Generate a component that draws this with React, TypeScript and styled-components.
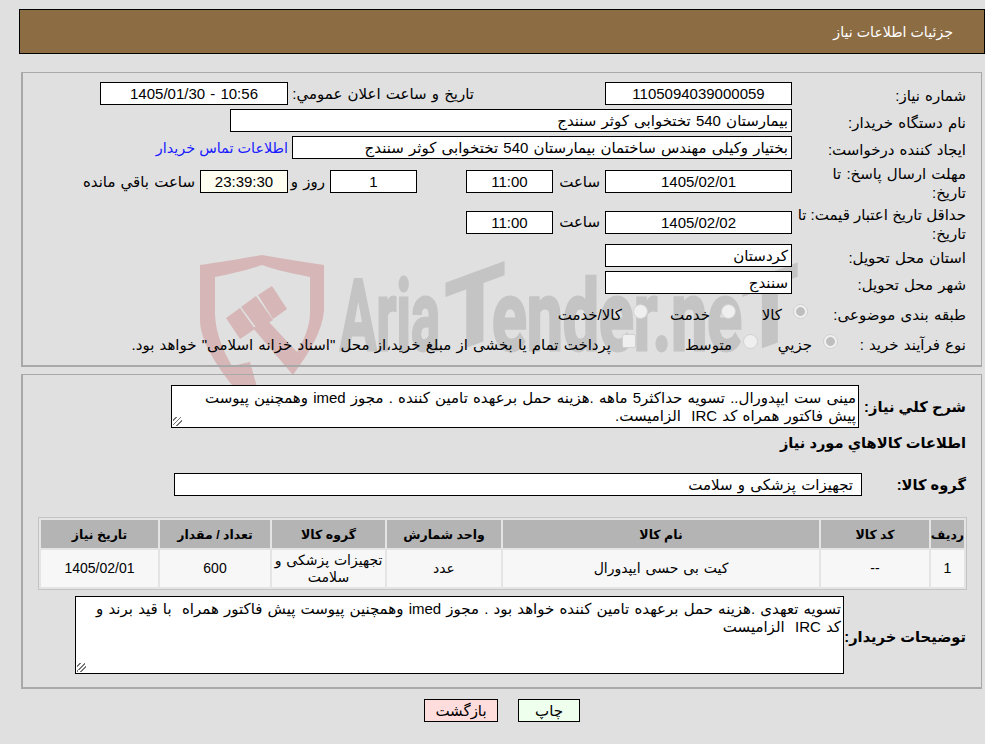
import React from "react";
import styled, { createGlobalStyle } from "styled-components";

const Global = createGlobalStyle`
  html, body { margin: 0; padding: 0; background: #e0e0e0; }
  body { font-family: "Liberation Sans", "DejaVu Sans", sans-serif; font-size: 15px; word-spacing: 1px; color: #000; }
  * { box-sizing: border-box; }
`;
const Page = styled.div`
  position: relative; width: 985px; height: 744px; padding: 9px 0 0 19px; overflow: hidden; direction: rtl;
`;
const Header = styled.div`
  position: relative; z-index: 1;
  height: 45px; background: #8c6c43; border: 1px solid #000; color: #fff; font-size: 14.2px; word-spacing: 0;
  display: flex; align-items: center; padding: 0 31px 0 0; margin-bottom: 18px;
`;
const Panel = styled.section`
  position: relative; z-index: 1;
  width: 961px; margin-right: 3px; border: 1px solid #a8a8a8; border-bottom-width: 2px; border-left-width: 2px;
`;
const FormPanel = styled(Panel)`height: 295px; padding-top: 9px; margin-bottom: 7px;`;
const DetailPanel = styled(Panel)`height: 315px; padding-top: 10px; margin-bottom: 10px;`;
const Row = styled.div<{ $h: number }>`
  display: flex; align-items: center; height: ${p => p.$h}px; margin-bottom: 4px; padding-right: 15px;
`;
const Label = styled.div<{ $w?: number; $tight?: boolean }>`
  width: ${p => p.$w ?? 174}px; flex: none; line-height: 19px; padding-top: 3px; white-space: nowrap;
  word-spacing: ${p => (p.$tight ? "0" : "1px")};
`;
const Field = styled.div<{ $w: number; $bg?: string; $align?: string; $mr?: number }>`
  width: ${p => p.$w}px; height: 23px; flex: none; background: ${p => p.$bg ?? "#fff"}; border: 1px solid #000;
  text-align: ${p => p.$align ?? "center"}; padding: 0 3px; line-height: 21px; white-space: nowrap; overflow: hidden;
  margin-right: ${p => p.$mr ?? 0}px;
`;
const Text = styled.span<{ $mr?: number; $w?: number }>`
  margin-right: ${p => p.$mr ?? 0}px; white-space: nowrap; flex: none;
  ${p => (p.$w ? `width:${p.$w}px;` : "")}
`;
const BlueLink = styled.a`color: #1a1aff; margin-right: 4px; white-space: nowrap; font-size: 14.4px; word-spacing: 0;`;
const Radio = styled.span<{ $w: number }>`
  width: ${p => p.$w}px; flex: none; align-self: stretch; padding-top: 4px; display: flex; align-items: center; gap: 11px; white-space: nowrap;
`;
const RadioMark = styled.i<{ $on?: boolean }>`
  width: 15px; height: 15px; margin-bottom: 8px; border-radius: 50%; border: 1px solid #d0d0d0; flex: none;
  background: ${p => (p.$on ? "radial-gradient(circle, #bebebe 0 4px, #f0f0f0 4.8px)" : "#efefef")};
`;
const CheckMark = styled.i`
  width: 14px; height: 14px; margin-bottom: 8px; border-radius: 2px; border: 1px solid #d0d0d0; background: #efefef; flex: none;
`;
const BoldRow = styled.div<{ $h: number }>`
  display: flex; align-items: flex-start; height: ${p => p.$h}px; padding-right: 15px; font-weight: bold; font-size: 14.67px; word-spacing: 0;
`;
const BoldLabel = styled.div<{ $w: number; $top?: number }>`
  width: ${p => p.$w}px; flex: none; padding-top: ${p => p.$top ?? 0}px; white-space: nowrap;
`;
const Area = styled.div<{ $w: number; $h: number }>`
  position: relative; width: ${p => p.$w}px; height: ${p => p.$h}px; background: #fff; border: 1px solid #000; font-weight: normal;
  padding: 3px 2px 0 0; line-height: 18px; font-size: 15px; word-spacing: 1px; flex: none; white-space: nowrap; overflow: hidden;
  &::after {
    content: ""; position: absolute; left: 1px; bottom: 1px; width: 9px; height: 9px;
    background: linear-gradient(45deg, transparent 25%, #777 25% 35%, transparent 35% 50%, #777 50% 60%, transparent 60% 75%, #777 75% 85%, transparent 85%);
    transform: scaleX(-1);
  }
`;
const GroupField = styled.div`
  width: 688px; height: 23px; background: #fff; border: 1px solid #000; font-weight: normal; font-size: 15px; word-spacing: 1px; line-height: 21px; padding-right: 8px; flex: none;
`;
const Table = styled.table`
  width: 929px; margin: 0 14px 6px 0; border-collapse: separate; border-spacing: 2px; border: 1px solid #c4c4c4; background: #e4e4e4; table-layout: fixed;
`;
const Th = styled.th<{ $w: number }>`
  width: ${p => p.$w}px; background: #b4b4b4; height: 28px; font-size: 12.5px; padding: 0; word-spacing: 0;
`;
const Td = styled.td`
  background: #f7f7f7; text-align: center; padding: 0; font-size: 14px; line-height: 17px; height: 37px; white-space: nowrap;
`;
const Buttons = styled.div`
  position: relative; z-index: 1; display: flex; justify-content: center; gap: 20px;
`;
const Btn = styled.button<{ $bg: string; $w: number }>`
  width: ${p => p.$w}px; height: 23px; background: ${p => p.$bg}; border: 1px solid #000; font: inherit; padding: 0; color: #000;
`;
const Watermark = styled.svg`
  position: absolute; left: 195px; top: 245px; pointer-events: none; direction: ltr;
`;
const MarkText = styled.text`
  font-family: Roboto, sans-serif; font-weight: 700; font-size: 98px; fill: #c4c4c4; stroke: #c4c4c4; stroke-width: 3px; word-spacing: 0;
`;

const Logo = () => (
  <Watermark width="620" height="150" viewBox="195 245 620 150">
    <g fill="#d6b6b6">
      <path d="M200 265 C222 262 245 258 262 255 C280 258 302 262 324 265 L324 310 C322 335 305 358 293 375 L253 328 L267 320 L297 352 C305 338 310 325 310 313 L310 277 C295 274 275 270 262 265 C248 270 230 274 215 277 L215 315 C216 335 224 352 232 366 L250 362 L257 387 L232 385 C216 365 200 340 200 320 Z" />
      <polygon points="226,318 240,308 255,329 240,339" />
      <polygon points="241,307 256,296 273,320 258,330" />
      <polygon points="258,295 272,286 287,309 273,319" />
    </g>
    <MarkText x="340" y="350" textLength="100" lengthAdjust="spacingAndGlyphs">Aria</MarkText>
    <MarkText x="445" y="350" transform="translate(0 166) skewY(-20)" textLength="60" lengthAdjust="spacingAndGlyphs">T</MarkText>
    <MarkText x="492" y="350" textLength="250" lengthAdjust="spacingAndGlyphs">ender.ne</MarkText>
    <MarkText x="742" y="350" transform="translate(0 274) skewY(-20)" textLength="56" lengthAdjust="spacingAndGlyphs">T</MarkText>
  </Watermark>
);

export default function App() {
  return (
    <Page>
      <Global />
      <Logo />
      <Header>جزئیات اطلاعات نیاز</Header>
      <FormPanel>
        <Row $h={23}>
          <Label>شماره نیاز:</Label>
          <Field $w={187}>1105094039000059</Field>
          <Text $mr={131} $w={186}>تاریخ و ساعت اعلان عمومي:</Text>
          <Field $w={188}>10:56 - 1405/01/30</Field>
        </Row>
        <Row $h={23}>
          <Label>نام دستگاه خریدار:</Label>
          <Field $w={562} $align="right">بیمارستان 540 تختخوابی کوثر سنندج</Field>
        </Row>
        <Row $h={23}>
          <Label>ایجاد کننده درخواست:</Label>
          <Field $w={500} $align="right">بختیار وکیلی مهندس ساختمان بیمارستان 540 تختخوابی کوثر سنندج</Field>
          <BlueLink>اطلاعات تماس خریدار</BlueLink>
        </Row>
        <Row $h={37}>
          <Label>مهلت ارسال پاسخ: تا<br />تاریخ:</Label>
          <Field $w={187}>1405/02/01</Field>
          <Text $mr={5} $w={47}>ساعت</Text>
          <Field $w={87}>11:00</Field>
          <Field $w={87} $mr={49}>1</Field>
          <Text $mr={5} $w={37}>روز و</Text>
          <Field $w={88} $bg="#fdfdf0">23:39:30</Field>
          <Text $mr={5}>ساعت باقي مانده</Text>
        </Row>
        <Row $h={36}>
          <Label $tight>حداقل تاریخ اعتبار قیمت: تا<br />تاریخ:</Label>
          <Field $w={187}>1405/02/02</Field>
          <Text $mr={5} $w={47}>ساعت</Text>
          <Field $w={87}>11:00</Field>
        </Row>
        <Row $h={23}>
          <Label>استان محل تحویل:</Label>
          <Field $w={187} $align="right">کردستان</Field>
        </Row>
        <Row $h={23}>
          <Label>شهر محل تحویل:</Label>
          <Field $w={187} $align="right">سنندج</Field>
        </Row>
        <Row $h={30}>
          <Label $w={158}>طبقه بندی موضوعی:</Label>
          <Radio $w={72}><RadioMark $on />کالا</Radio>
          <Radio $w={88}><RadioMark />خدمت</Radio>
          <Radio $w={100}><RadioMark />کالا/خدمت</Radio>
        </Row>
        <Row $h={22}>
          <Label $w={128}>نوع فرآیند خرید :</Label>
          <Radio $w={80}><RadioMark $on />جزیي</Radio>
          <Radio $w={122}><RadioMark />متوسط</Radio>
          <Radio $w={520}><CheckMark />پرداخت تمام یا بخشی از مبلغ خرید،از محل "اسناد خزانه اسلامی" خواهد بود.</Radio>
        </Row>
      </FormPanel>
      <DetailPanel>
        <BoldRow $h={43}>
          <BoldLabel $w={107} $top={13}>شرح کلي نیاز:</BoldLabel>
          <Area $w={688} $h={43}>مینی ست ایپدورال.. تسویه حداکثر5 ماهه .هزینه حمل برعهده تامین کننده . مجوز imed وهمچنین پیوست<br />پیش فاکتور همراه کد IRC &nbsp;الزامیست.</Area>
        </BoldRow>
        <BoldRow $h={45}><BoldLabel $w={400} $top={6}>اطلاعات کالاهاي مورد نیاز</BoldLabel></BoldRow>
        <BoldRow $h={44}>
          <BoldLabel $w={104} $top={3}>گروه کالا:</BoldLabel>
          <GroupField>تجهیزات پزشکی و سلامت</GroupField>
        </BoldRow>
        <Table>
          <thead><tr>
            <Th $w={33}>ردیف</Th><Th $w={108}>کد کالا</Th><Th $w={316}>نام کالا</Th><Th $w={114}>واحد شمارش</Th><Th $w={113}>گروه کالا</Th><Th $w={110}>تعداد / مقدار</Th><Th $w={117}>تاریخ نیاز</Th>
          </tr></thead>
          <tbody><tr>
            <Td>1</Td><Td>--</Td><Td>کیت بی حسی ایپدورال</Td><Td>عدد</Td><Td>تجهیزات پزشکی و<br />سلامت</Td><Td>600</Td><Td>1405/02/01</Td>
          </tr></tbody>
        </Table>
        <BoldRow $h={78}>
          <BoldLabel $w={122} $top={32}>توضیحات خریدار:</BoldLabel>
          <Area $w={769} $h={78}>تسویه تعهدی .هزینه حمل برعهده تامین کننده خواهد بود . مجوز imed وهمچنین پیوست پیش فاکتور همراه &nbsp;با قید برند و<br />کد IRC &nbsp;الزامیست</Area>
        </BoldRow>
      </DetailPanel>
      <Buttons>
        <Btn $bg="#eeffee" $w={62}>چاپ</Btn>
        <Btn $bg="#ffdddd" $w={74}>بازگشت</Btn>
      </Buttons>
    </Page>
  );
}
